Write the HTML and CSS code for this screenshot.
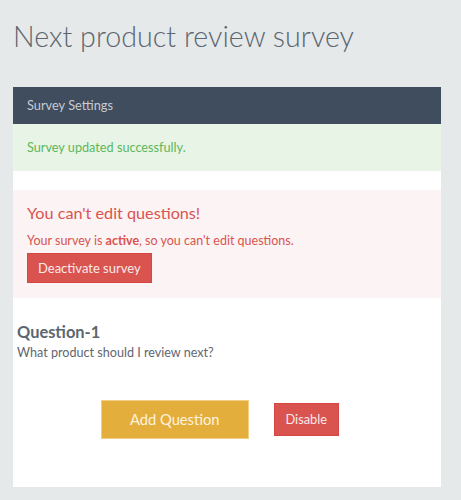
FILE: index.html
```html
<!DOCTYPE html>
<html lang="en">

<head>
    <meta charset="UTF-8">
    <title>Next product review survey</title>
    <meta name="viewport" content="width=device-width, initial-scale=1.0">
    <link rel="stylesheet" href="styles.css">
</head>

<body>
    <div class="page">
        <h1 class="title">Next product review survey</h1>

        <div class="panel">
            <div class="panel-heading">Survey Settings</div>
            <div class="alert-success">Survey updated successfully.</div>

            <div class="alert-danger">
                <h4>You can't edit questions!</h4>
                <p>Your survey is <b>active</b>, so you can't edit questions.</p>
                <button class="btn btn-red">Deactivate survey</button>
            </div>

            <!-- Questions -->
            <div class="question">
                <div class="question-title">Question-1</div>
                <div class="question-text">What product should I review next?</div>
            </div>

            <div class="actions">
                <button class="btn btn-yellow">Add Question</button>
                <button class="btn btn-red btn-small">Disable</button>
            </div>
        </div>
    </div>
</body>

</html>
```

FILE: styles.css
```css
body {
    background: #e6e9ea;
    color: #5b6670;
    font-family: 'Lato', 'Liberation Sans', sans-serif;
    margin: 0;
    padding: 0;
}

.page {
    padding: 0 20px 0 13px;
}

.title {
    font-size: 28.7px;
    font-weight: 300;
    line-height: 33px;
    color: #5c6670;
    margin: 20px 0 34px 0;
}

.panel {
    background: #fff;
    padding-bottom: 48px;
}

.panel-heading {
    background: #3f4d5f;
    color: #c5cbd2;
    font-size: 12.8px;
    line-height: 37px;
    padding: 0 14px;
}

.alert-success {
    background: #e8f4e6;
    color: #5cb85c;
    font-size: 12.7px;
    line-height: 19px;
    padding: 14px;
    margin-bottom: 19px;
}

.alert-danger {
    background: #fcf4f4;
    color: #d9534f;
    padding: 13px 14px 15px 14px;
}

.alert-danger h4 {
    font-size: 16.2px;
    font-weight: 400;
    line-height: 19px;
    margin: 0 0 9px 0;
}

.alert-danger p {
    font-size: 12.5px;
    line-height: 19px;
    margin: 0 0 3px 0;
}

.btn {
    font-family: inherit;
    border: 1px solid;
    border-radius: 0;
    cursor: pointer;
}

.btn-red {
    background: #d9534f;
    border-color: #d64742;
    color: #fbeaea;
    font-size: 13px;
    line-height: 18px;
    padding: 5px 10px;
}

.btn-yellow {
    background: #e3ae3b;
    border-color: #f2cf83;
    color: #fdf3df;
    font-size: 14.7px;
    line-height: 18px;
    padding: 9px 28px 10px 28px;
}

.btn-small {
    font-size: 12.8px;
    line-height: 17px;
    padding: 7px 11px;
}

.question {
    padding: 24px 4px 0 4px;
}

.question-title {
    font-size: 16.4px;
    font-weight: 700;
    line-height: 19px;
    margin-bottom: 2px;
}

.question-text {
    font-size: 12.6px;
    line-height: 19px;
    color: #5f6670;
}

.actions {
    display: flex;
    align-items: center;
    gap: 25px;
    padding-left: 88px;
    margin-top: 38px;
}
```
